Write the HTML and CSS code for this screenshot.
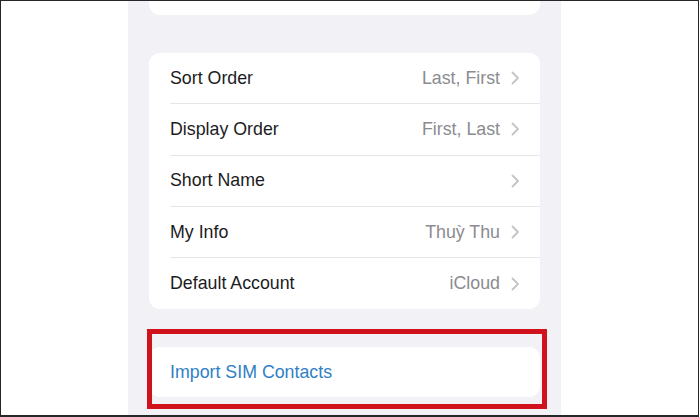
FILE: index.html
```html
<!DOCTYPE html>
<html lang="en">
<head>
    <meta charset="UTF-8">
    <meta name="viewport" content="width=device-width, initial-scale=1">
    <title>Contacts</title>
    <link rel="stylesheet" href="styles.css">
</head>
<body>
    <div class="frame">
        <div class="phone">
            <div class="card card-top"></div>

            <div class="card list">
                <div class="row">
                    <span class="label">Sort Order</span>
                    <span class="value">Last, First</span>
                    <svg class="chev" width="9" height="14" viewBox="0 0 9 14"><polyline points="1.5,1.5 7,7 1.5,12.5" /></svg>
                </div>
                <div class="row">
                    <span class="label">Display Order</span>
                    <span class="value">First, Last</span>
                    <svg class="chev" width="9" height="14" viewBox="0 0 9 14"><polyline points="1.5,1.5 7,7 1.5,12.5" /></svg>
                </div>
                <div class="row">
                    <span class="label">Short Name</span>
                    <span class="value"></span>
                    <svg class="chev" width="9" height="14" viewBox="0 0 9 14"><polyline points="1.5,1.5 7,7 1.5,12.5" /></svg>
                </div>
                <div class="row">
                    <span class="label">My Info</span>
                    <span class="value">Thuỳ Thu</span>
                    <svg class="chev" width="9" height="14" viewBox="0 0 9 14"><polyline points="1.5,1.5 7,7 1.5,12.5" /></svg>
                </div>
                <div class="row">
                    <span class="label">Default Account</span>
                    <span class="value">iCloud</span>
                    <svg class="chev" width="9" height="14" viewBox="0 0 9 14"><polyline points="1.5,1.5 7,7 1.5,12.5" /></svg>
                </div>
            </div>

            <div class="import">
                <div class="card action">
                    <span class="link">Import SIM Contacts</span>
                </div>
                <div class="highlight"></div>
            </div>
        </div>
    </div>
</body>
</html>
```

FILE: styles.css
```css
* { box-sizing: border-box; }

html, body {
    margin: 0;
    padding: 0;
    background: #fff;
}

body {
    font-family: "Liberation Sans", Arial, sans-serif;
    font-size: 17.8px;
    overflow: hidden;
}

.frame {
    width: 699px;
    height: 417px;
    border: 1px solid #262626;
    border-bottom-width: 2px;
    overflow: hidden;
}

.phone {
    width: 433px;
    height: 100%;
    margin-left: 127px;
    padding: 0 21px;
    background: #f1f1f6;
}

.card {
    background: #fff;
    border-radius: 11px;
}

.card-top {
    height: 14px;
    border-radius: 0 0 11px 11px;
}

.list {
    margin-top: 38px;
}

.row {
    display: flex;
    align-items: center;
    height: 51.3px;
    margin-left: 21px;
    padding-right: 20px;
    border-bottom: 1px solid #e6e6ea;
}

.row:last-child { border-bottom: none; }

.label {
    flex: 1;
    color: #1c1c1e;
}

.value {
    color: #8b8b90;
    margin-right: 11px;
}

.chev polyline {
    fill: none;
    stroke: #c4c4c8;
    stroke-width: 1.8;
    stroke-linecap: round;
    stroke-linejoin: round;
}

.import {
    position: relative;
    margin-top: 38px;
}

.action {
    height: 50px;
    display: flex;
    align-items: center;
    padding-left: 21px;
}

.link { color: #2f7fc6; }

.highlight {
    position: absolute;
    left: -2px;
    right: -7px;
    top: -18px;
    bottom: -12px;
    border: 5px solid #d0121c;
}
```
